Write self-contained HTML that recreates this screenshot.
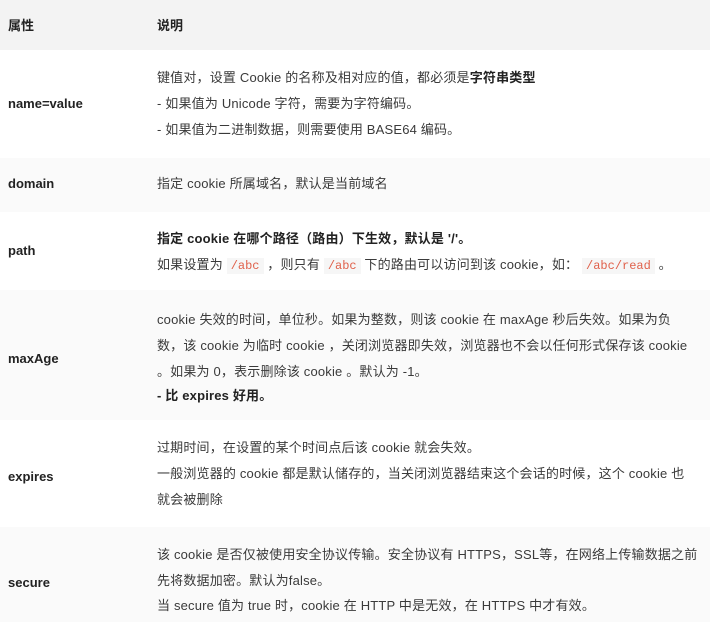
<html><head><style>
body{margin:0;width:710px;height:622px;position:relative;overflow:hidden;background:#fff;font-family:"Liberation Sans","Noto Sans CJK SC",sans-serif;font-size:13px;color:#3a3a3a}
.bg{position:absolute;left:0;width:710px}
.t{position:absolute;white-space:nowrap;line-height:16px}
.d{letter-spacing:.18px}
.l{left:8px;font-weight:bold;color:#222}
.d{left:157px}
b{color:#222}
code{font-family:"Liberation Mono",monospace;font-size:12px;color:#e0604a;background:#f6f6f6;padding:1px 4px;letter-spacing:0}
</style></head><body>
<div class="bg" style="top:0;height:50px;background:#f3f3f3"></div>
<div class="bg" style="top:158px;height:54px;background:#fafafa"></div>
<div class="bg" style="top:290px;height:130px;background:#fafafa"></div>
<div class="bg" style="top:527px;height:95px;background:#fafafa"></div>
<div class="t l" style="top:18px">属性</div>
<div class="t" style="top:18px;left:157px;font-weight:bold;color:#222">说明</div>

<div class="t l" style="top:96px">name=value</div>
<div class="t d" style="top:70px">键值对，设置 Cookie 的名称及相对应的值，都必须是<b>字符串类型</b></div>
<div class="t d" style="top:96px">- 如果值为 Unicode 字符，需要为字符编码。</div>
<div class="t d" style="top:122px">- 如果值为二进制数据，则需要使用 BASE64 编码。</div>

<div class="t l" style="top:176px">domain</div>
<div class="t d" style="top:176px">指定 cookie 所属域名，默认是当前域名</div>

<div class="t l" style="top:243px">path</div>
<div class="t d" style="top:231px"><b>指定 cookie 在哪个路径（路由）下生效，默认是 '/'。</b></div>
<div class="t d" style="top:257px">如果设置为 <code>/abc</code> ，则只有 <code>/abc</code> 下的路由可以访问到该 cookie，如： <code>/abc/read</code> 。</div>

<div class="t l" style="top:351px">maxAge</div>
<div class="t d" style="top:312px">cookie 失效的时间，单位秒。如果为整数，则该 cookie 在 maxAge 秒后失效。如果为负</div>
<div class="t d" style="top:338px">数，该 cookie 为临时 cookie ，关闭浏览器即失效，浏览器也不会以任何形式保存该 cookie</div>
<div class="t d" style="top:364px">。如果为 0，表示删除该 cookie 。默认为 -1。</div>
<div class="t d" style="top:388px"><b>- 比 expires 好用。</b></div>

<div class="t l" style="top:469px">expires</div>
<div class="t d" style="top:440px">过期时间，在设置的某个时间点后该 cookie 就会失效。</div>
<div class="t d" style="top:466px">一般浏览器的 cookie 都是默认储存的，当关闭浏览器结束这个会话的时候，这个 cookie 也</div>
<div class="t d" style="top:492px">就会被删除</div>

<div class="t l" style="top:575px">secure</div>
<div class="t d" style="top:547px">该 cookie 是否仅被使用安全协议传输。安全协议有 HTTPS，SSL等，在网络上传输数据之前</div>
<div class="t d" style="top:573px">先将数据加密。默认为false。</div>
<div class="t d" style="top:598px">当 secure 值为 true 时，cookie 在 HTTP 中是无效，在 HTTPS 中才有效。</div>
</body></html>
